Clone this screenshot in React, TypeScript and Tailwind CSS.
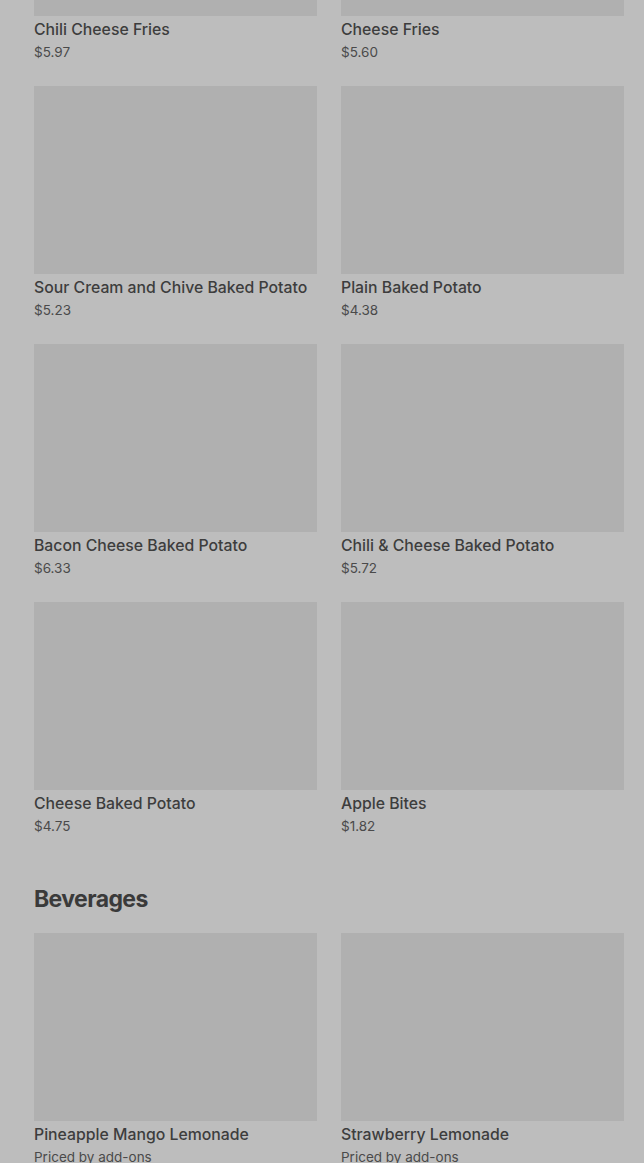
import React from 'react';

type Item = { name: string; price: string };

const sides: Item[] = [
    { name: 'Chili Cheese Fries', price: '$5.97' },
    { name: 'Cheese Fries', price: '$5.60' },
    { name: 'Sour Cream and Chive Baked Potato', price: '$5.23' },
    { name: 'Plain Baked Potato', price: '$4.38' },
    { name: 'Bacon Cheese Baked Potato', price: '$6.33' },
    { name: 'Chili & Cheese Baked Potato', price: '$5.72' },
    { name: 'Cheese Baked Potato', price: '$4.75' },
    { name: 'Apple Bites', price: '$1.82' },
];

const beverages: Item[] = [
    { name: 'Pineapple Mango Lemonade', price: 'Priced by add-ons' },
    { name: 'Strawberry Lemonade', price: 'Priced by add-ons' },
];

function MenuCard({ item }: { item: Item }) {
    return (
        <div className="flex flex-col">
            <div className="h-[188px] w-full bg-[#b0b0b0]" />
            <div className="mt-[4px] text-[15.8px] leading-5 font-medium text-[#3d3d3d] whitespace-nowrap">
                {item.name}
            </div>
            <div className="mt-[2px] text-[13.5px] leading-5 text-[#4a4a4a]">{item.price}</div>
        </div>
    );
}

export default function App() {
    return (
        <div
            className="h-[1163px] overflow-hidden bg-[#bdbdbd] pl-[34px] pr-[20px]"
            style={{ fontFamily: 'Inter, "Noto Sans", sans-serif' }}
        >
            {/* ── Sides (scrolled partway) ───────────────────────────── */}
            <div className="-mt-[172px] grid grid-cols-2 gap-x-[24px] gap-y-[24px]">
                {sides.map((item) => (
                    <MenuCard key={item.name} item={item} />
                ))}
            </div>

            {/* ── Beverages ─────────────────────────────────────────── */}
            <h2 className="mt-[47px] text-[23px] leading-8 font-bold tracking-[-0.6px] text-[#3a3a3a]">
                Beverages
            </h2>
            <div className="mt-[18px] grid grid-cols-2 gap-x-[24px] gap-y-[24px]">
                {beverages.map((item) => (
                    <MenuCard key={item.name} item={item} />
                ))}
            </div>
        </div>
    );
}
